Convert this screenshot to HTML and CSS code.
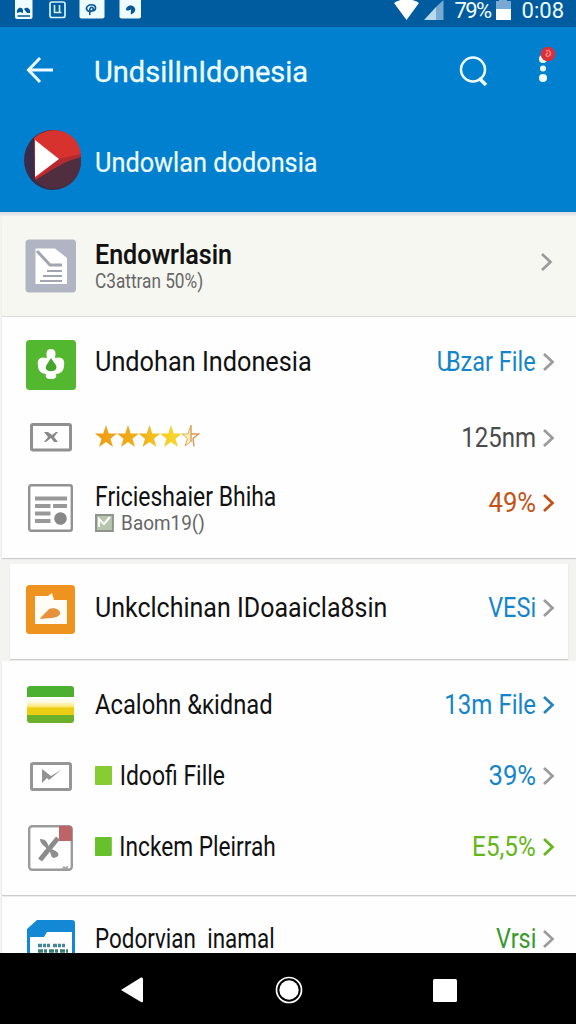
FILE: index.html
```html
<!DOCTYPE html>
<html lang="id">
<head>
<meta charset="utf-8">
<title>UndsillnIdonesia</title>
<link rel="stylesheet" href="styles.css">
</head>
<body>
<svg width="0" height="0" class="defs">
  <defs>
    <symbol id="chev" viewBox="0 0 14 20"><path d="M2 2l8.500 8L2 18" fill="none" stroke="currentColor" stroke-width="2.700"/></symbol>
    <linearGradient id="gold"><stop offset="0" stop-color="#ee9d14"/><stop offset=".55" stop-color="#efb01a"/><stop offset=".8" stop-color="#f6cf25"/><stop offset="1" stop-color="#f8d52c"/></linearGradient>
    <linearGradient id="flag" x2="0" y2="1"><stop offset="0" stop-color="#fff"/><stop offset=".45" stop-color="#fffbe0"/><stop offset="1" stop-color="#f8df52"/></linearGradient>
  </defs>
</svg>
<div class="phone">
  <header class="top">
    <div class="status">
      <svg class="status-left" width="150" height="27" viewBox="0 0 150 27">
        <rect x="15" y="-3" width="17.500" height="22" rx="2" fill="#eefbff"/>
        <path d="M17.500 16h12.500" stroke="#07579a" stroke-width="1.500"/><path d="M17 13c-1-5 5-7 6-3v3l-3-1zM24 9c3-3 7 0 6 4h-3z" fill="#07579a"/>
        <rect x="50" y="2" width="15" height="15.500" rx="2" fill="none" stroke="#d6f3fc" stroke-width="1.700"/>
        <path d="M54.500 5v7.500h7M59.500 5v7" fill="none" stroke="#d6f3fc" stroke-width="1.600"/>
        <rect x="79.500" y="-2" width="25" height="20.500" rx="2" fill="#eefbff"/>
        <path d="M90 15c-1-2 0-4 2-4 4 0 5-5 1-6s-8 2-6 5 8 0 6-2-4 1-3 3" fill="none" stroke="#07579a" stroke-width="1.600"/>
        <rect x="119.500" y="-2" width="21.500" height="20.500" rx="2" fill="#eefbff"/>
        <path d="M126 10c0-4 5-6 8-3s0 6-2 7-1-2-1-4-2 2-5 0z" fill="#07579a"/>
      </svg>
      <div class="status-right">
        <svg width="50" height="21" viewBox="0 0 50 21">
          <path d="M0 3C7-2 18-2 25 3L12.500 20z" fill="#fff"/>
          <path d="M30 20L42 7v13z" fill="#b9d9ee"/><path d="M42 7l7.500-7v20H42z" fill="#7baad0"/>
        </svg>
        <span class="percent">79%</span>
        <svg width="15" height="21" viewBox="0 0 15 21"><path d="M0 1h3V0h8v1h4v9H0z" fill="#79a9d2"/><path d="M0 9h15v11H0z" fill="#fff"/></svg>
        <span class="clock">0:08</span>
      </div>
    </div>
    <div class="appbar">
      <svg class="back" width="28" height="28" viewBox="0 0 28 28"><path d="M14 2L2.500 14l11.500 12M2 14h25" fill="none" stroke="#effcff" stroke-width="3"/></svg>
      <h1 class="title">UndsilInIdonesia</h1>
      <svg class="search" width="30" height="32" viewBox="0 0 30 32"><circle cx="14" cy="14.500" r="12" fill="none" stroke="#effcff" stroke-width="2.500"/><path d="M20 23l7 7" stroke="#effcff" stroke-width="3.500"/></svg>
      <svg class="more" width="18" height="38" viewBox="0 0 18 38"><circle cx="5" cy="13" r="4" fill="#f2feff"/><circle cx="5" cy="22.500" r="3" fill="#f2feff"/><circle cx="5" cy="32" r="4" fill="#f2feff"/><circle cx="10" cy="8" r="7.300" fill="#d9303a"/><path d="M8 5c4-2 6 3 3 5s-4-2-1-3" fill="none" stroke="#ff7f80" stroke-width="1.400"/></svg>
    </div>
    <div class="hero">
      <svg width="57" height="61" viewBox="0 0 57 61">
        <ellipse cx="28.500" cy="30" rx="28.500" ry="30" fill="#3b2b4b"/>
        <path d="M10 8C28-8 57 2 57 27L11 50z" fill="#d8322e"/>
        <path d="M57 27C38 31 27 41 11 50c17 18 48 8 46-23z" fill="#502e40"/>
        <path d="M34 29l23-5v3C38 31 27 41 11 50z" fill="#b52a31"/>
        <path d="M11 10l24 19L11 47z" fill="#fff"/>
      </svg>
      <span class="hero-name">Undowlan dodonsia</span>
    </div>
  </header>

  <main class="list">
    <section class="card featured">
      <div class="row">
        <svg class="icon" width="52" height="54" viewBox="0 0 52 54"><rect x=".5" y=".5" width="50.500" height="53" rx="3.500" fill="#b1b5c3"/><path d="M10.500 9.500H30L42 19v26H10.500z" fill="#fff"/><path d="M12 12l13 14h12" fill="none" stroke="#a2a5b0" stroke-width="3"/><path d="M22 32h15M18 37h19M15 42h22" stroke="#a2a5b0" stroke-width="2.200"/></svg>
        <div class="label"><span class="name bold">Endowrlasin</span><span class="sub s1">C3attran 50%)</span></div>
        <svg class="chev gray"><use href="#chev"/></svg>
      </div>
    </section>

    <section class="card">
      <div class="row tall">
        <svg class="icon low" width="50" height="50" viewBox="0 0 50 50"><rect width="50" height="50" rx="3.500" fill="#53b82f"/><path d="M25 9c5 0 5 4 4 9 8-2 10 2 9 8 0 5-4 8-8 8 1 4-1 5-5 5s-6-1-5-5c-4 0-8-3-8-8-1-6 1-10 9-8-1-5-1-9 4-9z" fill="#fff"/><path d="M25 18c3 5 7 8 5 11-2 3-8 3-10 0-1-3 2-6 5-11z" fill="#43a52a"/></svg>
        <span class="name n1">Undohan Indonesia</span>
        <span class="value blue v1"><span class="tight">U</span>Bzar File</span>
        <svg class="chev gray"><use href="#chev"/></svg>
      </div>
      <div class="row mid">
        <svg class="icon" width="42" height="29" viewBox="0 0 42 29"><rect x="1.500" y="1.500" width="39" height="25.500" rx="1.500" fill="#fff" stroke="#909090" stroke-width="3"/><path d="M14 9h4l4 3 4-3h2l-4 5 4 5h-4l-3-4-5 4h-2l4-5z" fill="#888"/></svg>
        <svg class="stars" width="105" height="24" viewBox="0 0 105 24">
          <path fill="url(#gold)" d="M11 0l2.700 8.500H22l-6.500 5.300L18 22l-7-5-7 5 2.500-8.200L0 8.500h8.300zM33 0l2.700 8.500H44l-6.500 5.300L40 22l-7-5-7 5 2.500-8.200L22 8.500h8.300zM54.500 0l2.700 8.500h8.300L59 13.800l2.500 8.200-7-5-7 5 2.500-8.200-6.500-5.300h8.300zM76 0l2.700 8.500H87l-6.500 5.300L83 22l-7-5-7 5 2.500-8.200L65 8.500h8.300z"/>
          <path d="M95.500 1l-2.500 8h-6l5.500 4.500L90 21l5.500-4" fill="#fff0ba" stroke="#e0b054"/><path d="M96 0v17M96 9h7.500L98 13.500l1 8" fill="none" stroke="#d39a57" stroke-width="1.400"/>
        </svg>
        <span class="value dark v2">125nm</span>
        <svg class="chev gray"><use href="#chev"/></svg>
      </div>
      <div class="row news">
        <svg class="icon low" width="45" height="48" viewBox="0 0 45 48"><rect x="1.200" y="1.200" width="42.600" height="45.600" rx="2" fill="#fff" stroke="#929292" stroke-width="2.400"/><path d="M7 14.500h32M7 22h15.500M25 22h14M7 29.500h15.500M7 37h15.500" stroke="#999" stroke-width="4"/><circle cx="32.500" cy="34.500" r="6.300" fill="#888"/></svg>
        <div class="label"><span class="name n2">Fricieshaier Bhiha</span><span class="sub s2"><svg width="21" height="18" viewBox="0 0 19 18" preserveAspectRatio="none"><rect x="1" y="1" width="17" height="16" fill="#b8c5ad" stroke="#8e948b" stroke-width="2"/><path d="M4 13V5l5 5 6-7" fill="none" stroke="#fff" stroke-width="2"/></svg>Baom19()</span></div>
        <span class="value orange v3">49%</span>
        <svg class="chev orange"><use href="#chev"/></svg>
      </div>
    </section>

    <section class="card raised">
      <div class="row">
        <svg class="icon" width="49" height="49" viewBox="0 0 49 49"><rect width="49" height="49" rx="3.500" fill="#ee9320"/><path d="M9 11h13l4-3 2 7h13v24H9z" fill="#fffdf5"/><path d="M14 34c3-5 6-6 9-10 6-2 12 1 11 5-2 5-13 4-20 5z" fill="#e6913c"/></svg>
        <span class="name n3">Unkclchinan IDoaaicla8sin</span>
        <span class="value blue v4">VESi</span>
        <svg class="chev gray"><use href="#chev"/></svg>
      </div>
    </section>

    <section class="card files">
      <div class="row first">
        <svg class="icon flag" width="47" height="37" viewBox="0 0 47 37"><path d="M0 11V3q0-3 3-3h41q3 0 3 3v8z" fill="#4bb02f"/><path d="M0 11h47v11H0z" fill="url(#flag)"/><path d="M0 21.500h47V29H0z" fill="#ebce13"/><path d="M0 29h47v5q0 3-3 3H3q-3 0-3-3z" fill="#6bb02b"/></svg>
        <span class="name n4">Acalohn &amp;&#x1D0B;idnad</span>
        <span class="value blue v5">13m File</span>
        <svg class="chev bluechev"><use href="#chev"/></svg>
      </div>
      <div class="row item">
        <svg class="icon" width="42" height="29" viewBox="0 0 42 29"><rect x="1.500" y="1.500" width="39" height="26" rx="1.500" fill="#fff" stroke="#969696" stroke-width="3"/><path d="M12 7l9 7 10-6-12 10-2-2-5 5z" fill="#929292"/></svg>
        <span class="name n5"><i class="square lime"></i>Idoofi Fille</span>
        <span class="value blue v6">39%</span>
        <svg class="chev gray"><use href="#chev"/></svg>
      </div>
      <div class="row item">
        <svg class="icon" width="45" height="46" viewBox="0 0 45 46"><rect x="1.200" y="1.200" width="42.600" height="43.600" rx="3" fill="#fff" stroke="#9b9b9b" stroke-width="2.400"/><path d="M31 1h10q3 0 3 3v12H31z" fill="#bc6468"/><path d="M12 35l18-22" stroke="#8c8c8c" stroke-width="5"/><path d="M12 14c7 0 7 4 9 8 2 3 5 2 8 5s1 5-3 6c-4-1-2-4-5-7-4-5-9-7-9-12z" fill="#8e8e8e"/><path d="M33 44l3-3 1 1 3-1v3z" fill="#aaa"/></svg>
        <span class="name n6"><i class="square"></i>Inckem Pleirrah</span>
        <span class="value green v7">E5,5%</span>
        <svg class="chev green"><use href="#chev"/></svg>
      </div>
    </section>

    <section class="card last">
      <div class="row">
        <svg class="icon low" width="48" height="34" viewBox="0 0 48 34"><path d="M0 10L10 1h35q3 0 3 3v30H0z" fill="#1389d6"/><path d="M3 18h14l3-5h25v21H3z" fill="#fff"/><g fill="none" stroke="#4387a1" stroke-width="3.500"><path stroke-dasharray="4 1 3 1 3 3" d="M11 26.500h29"/><path stroke="#397f76" stroke-dasharray="5 1 3 2" d="M11 32h30"/></g></svg>
        <span class="name n7">Podorvian&ensp;inamal</span>
        <span class="value deep v8">Vrsi</span>
        <svg class="chev gray"><use href="#chev"/></svg>
      </div>
    </section>
  </main>

  <nav class="navbar">
    <svg width="23" height="26" viewBox="0 0 23 26"><path d="M0 13L20 .5Q22 0 22 2v22q0 2-2 1z" fill="#fff"/></svg>
    <svg width="28" height="28" viewBox="0 0 28 28"><circle cx="14" cy="14" r="12.500" fill="none" stroke="#fff" stroke-width="1.700"/><circle cx="14" cy="14" r="9.700" fill="#fff"/></svg>
    <svg width="24" height="23" viewBox="0 0 24 23"><rect width="24" height="23" rx="1.500" fill="#fff"/></svg>
  </nav>
</div>
</body>
</html>
```
FILE: styles.css
```css
* { box-sizing: border-box; }
body { margin: 0; font-family: Roboto, "Liberation Sans", sans-serif; color: #111; background: #000; }
svg { display: block; flex: none; }
.defs { position: absolute; }
.phone { width: 576px; height: 1024px; display: flex; flex-direction: column; overflow: hidden; background: #f3f3f3; }

.top { height: 212px; flex: none; background: #0280d0; color: #effcff; }
.status { height: 27px; display: flex; justify-content: space-between; background: #015b9f; }
.status-right { display: flex; align-items: flex-start; padding-right: 12px; font-size: 22px; line-height: 21px; white-space: nowrap; }
.percent { margin: 0 5px 0 11px; letter-spacing: -1.6px; }
.clock { margin-left: 11px; }
.appbar { height: 88px; display: flex; align-items: center; padding: 0 26px; }
.back { margin-top: -2px; }
.title { margin: 1px 0 0 40px; flex: 1; font-size: 29px; font-weight: 400; line-height: 34px; white-space: nowrap; -webkit-text-stroke: .3px; }
.search { margin-right: 49px; }
.more { margin: -12px -6px 0 0; }
.hero { height: 90px; display: flex; align-items: center; padding-left: 24px; }
.hero-name { margin: 5px 0 0 14px; font-size: 27px; white-space: nowrap; transform: scaleX(.937); transform-origin: left; -webkit-text-stroke: .2px; }

.list { height: 741px; flex: none; overflow: hidden; padding-top: 4px; background: linear-gradient(#d9dce0, #f3f3f2 5px); display: flex; flex-direction: column; }
.card { flex: none; margin-left: 2px; background: #fefefe; box-shadow: 0 1px 1px #ccc; }
.row { display: grid; grid-template-columns: 53px 1fr auto 14px; align-items: center; height: 100%; padding: 0 20px 0 22px; }
.icon { justify-self: center; }
.name, .label, .stars { margin-left: 18px; }
.label { display: flex; flex-direction: column; align-items: flex-start; }
.label .name { margin-left: 0; }
.name { justify-self: start; font-size: 27px; line-height: 30px; white-space: nowrap; transform-origin: left; }
.bold { font-weight: 500; transform: scaleX(.928); -webkit-text-stroke: .2px; }
.sub { display: flex; align-items: center; font-size: 21px; line-height: 22px; color: #666; white-space: nowrap; transform-origin: left; }
.sub svg { margin-right: 8px; }
.value { font-size: 27px; line-height: 30px; margin-right: 6px; white-space: nowrap; transform-origin: right; }
.chev { width: 14px; height: 20px; grid-column: 4; }

/* Condensed label widths */
.n1 { transform: scaleX(.936); }
.n2 { transform: scaleX(.85); }
.n3 { transform: scaleX(.926); }
.n4 { transform: scaleX(.88); }
.n5 { transform: scaleX(.85); }
.n6 { transform: scaleX(.84); }
.n7 { transform: scaleX(.83); }
.s1 { transform: scaleX(.82); }
.s2 { transform: scaleX(.9); }
.v1 { transform: scaleX(.87); }
.tight { letter-spacing: -7px; }
.v2 { transform: scaleX(.89); }
.v3 { transform: scaleX(.95); }
.v4 { transform: scaleX(.87); }
.v5 { transform: scaleX(.89); }
.v6 { transform: scaleX(.95); }
.v7 { transform: scaleX(.9); }
.v8 { transform: scaleX(.87); }

.gray { color: #9b9b9b; }
.blue { color: #1585cb; }
.bluechev { color: #2684b8; }
.dark { color: #4b4b4b; }
.orange { color: #c45216; }
.green { color: #65b61b; }
.deep { color: #399a2c; }

.featured { height: 100px; background: #f7f7f2; box-shadow: 0 1px 1px #ddd; margin-bottom: 1px; }
.featured .row { padding-right: 22px; }
.featured .chev { margin-top: -9px; }
.tall { height: 90px; }
.mid { height: 60px; }
.mid .icon, .mid .value, .mid .chev { margin-top: 1px; }
.news { height: 91px; padding-bottom: 9px; }
.news .value, .news .chev { margin-top: -11px; }
.tall .low { margin-top: 6px; }
.raised { height: 95px; margin: 6px 8px 0 10px; }
.raised .row { padding: 0 12px 4px 14px; }
.raised .name, .raised .value, .raised .chev { margin-top: -4px; }
.files { height: 234px; margin-top: 2px; }
.first { height: 80px; padding-top: 7px; }
.item { height: 71px; }
.item .name { display: flex; align-items: center; }
.item .name, .item .value, .item .chev { margin-top: -2px; }
.square { width: 20px; height: 19px; margin-right: 9px; background: #66c12c; border-radius: 1px; }
.lime { background: #86cc32; }
.last { height: 56px; margin-top: 2px; }
.last .row { align-items: end; }
.last .name, .last .value { line-height: 28px; }
.last .chev { margin-bottom: 4px; }
.navbar { height: 71px; flex: none; display: flex; align-items: center; justify-content: space-between; padding: 3px 119px 0 121px; background: #000; }
```
